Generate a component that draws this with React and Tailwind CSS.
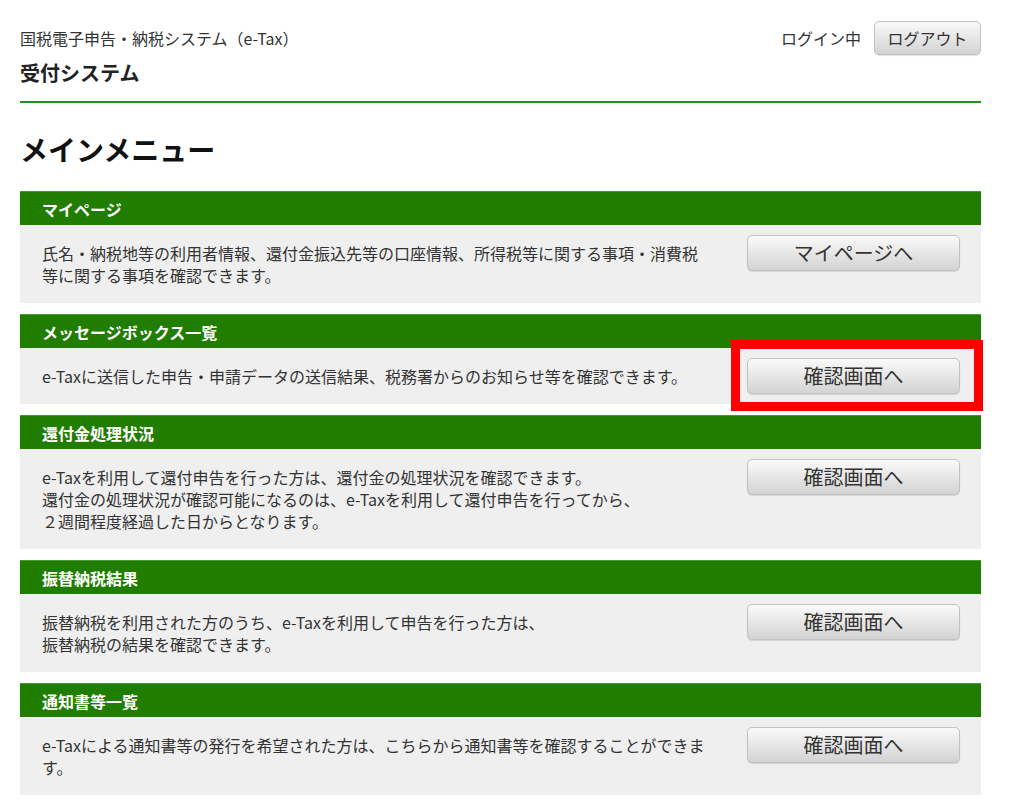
import React from 'react';

const font = { fontFamily: '"Noto Sans CJK JP", "Noto Sans", sans-serif' };

const sections = [
  {
    title: 'マイページ',
    lines: [
      '氏名・納税地等の利用者情報、還付金振込先等の口座情報、所得税等に関する事項・消費税',
      '等に関する事項を確認できます。',
    ],
    button: 'マイページへ',
  },
  {
    title: 'メッセージボックス一覧',
    lines: ['e-Taxに送信した申告・申請データの送信結果、税務署からのお知らせ等を確認できます。'],
    button: '確認画面へ',
    highlight: true,
  },
  {
    title: '還付金処理状況',
    lines: [
      'e-Taxを利用して還付申告を行った方は、還付金の処理状況を確認できます。',
      '還付金の処理状況が確認可能になるのは、e-Taxを利用して還付申告を行ってから、',
      '２週間程度経過した日からとなります。',
    ],
    button: '確認画面へ',
  },
  {
    title: '振替納税結果',
    lines: [
      '振替納税を利用された方のうち、e-Taxを利用して申告を行った方は、',
      '振替納税の結果を確認できます。',
    ],
    button: '確認画面へ',
  },
  {
    title: '通知書等一覧',
    lines: [
      'e-Taxによる通知書等の発行を希望された方は、こちらから通知書等を確認することができま',
      'す。',
    ],
    button: '確認画面へ',
  },
];

const GrayButton = ({ children, className }) => (
  <button
    className={`rounded-[5px] border border-[#c2c2c2] bg-gradient-to-b from-[#fafafa] to-[#d3d3d3] text-[#333] shadow-[0_1px_1px_rgba(0,0,0,0.12)] ${className}`}
  >
    {children}
  </button>
);

const MenuSection = ({ item }) => (
  <section className="mb-[11px]">
    {/* Heading bar */}
    <div className="h-[34px] bg-[#217d00] border-t border-[#4a9a33] pl-[22px] flex items-center">
      <h2 className="text-[16px] font-bold text-white leading-none">{item.title}</h2>
    </div>

    {/* Body */}
    <div className="bg-[#efefef] flex items-start justify-between pl-[22px] pr-[21px]">
      <p className="py-[17px] text-[16px] leading-[22px] text-[#333] w-[680px] whitespace-nowrap">
        {item.lines.map((line, i) => (
          <React.Fragment key={i}>
            {line}
            {i < item.lines.length - 1 && <br />}
          </React.Fragment>
        ))}
      </p>
      <div className="relative mt-[10px]">
        <GrayButton className="w-[213px] h-[36px] text-[20px] leading-none">{item.button}</GrayButton>
        {item.highlight && (
          <div className="absolute left-[-16px] top-[-18px] w-[252px] h-[71px] border-[9px] border-[#ff0000] pointer-events-none" />
        )}
      </div>
    </div>
  </section>
);

export default function App() {
  return (
    <div className="min-h-screen bg-white" style={font}>
      <div className="ml-[20px] w-[961px]">
        {/* Header */}
        <header className="pt-[26px] flex justify-between items-start border-b-2 border-[#1c961c] pb-[15px]">
          <div>
            <div className="text-[16px] leading-[24px] text-[#333]">国税電子申告・納税システム（e-Tax）</div>
            <div className="mt-[10px] text-[20px] leading-[26px] font-bold text-[#222]">受付システム</div>
          </div>
          <div className="flex items-center gap-[13px] -mt-[5px]">
            <span className="text-[16px] text-[#333]">ログイン中</span>
            <GrayButton className="w-[107px] h-[34px] text-[16px] leading-none">ログアウト</GrayButton>
          </div>
        </header>

        {/* Title */}
        <h1 className="mt-[26px] mb-[22px] text-[28px] leading-[40px] font-bold text-[#111]">メインメニュー</h1>

        {/* Sections */}
        <main>
          {sections.map((s) => (
            <MenuSection key={s.title} item={s} />
          ))}
        </main>
      </div>
    </div>
  );
}
